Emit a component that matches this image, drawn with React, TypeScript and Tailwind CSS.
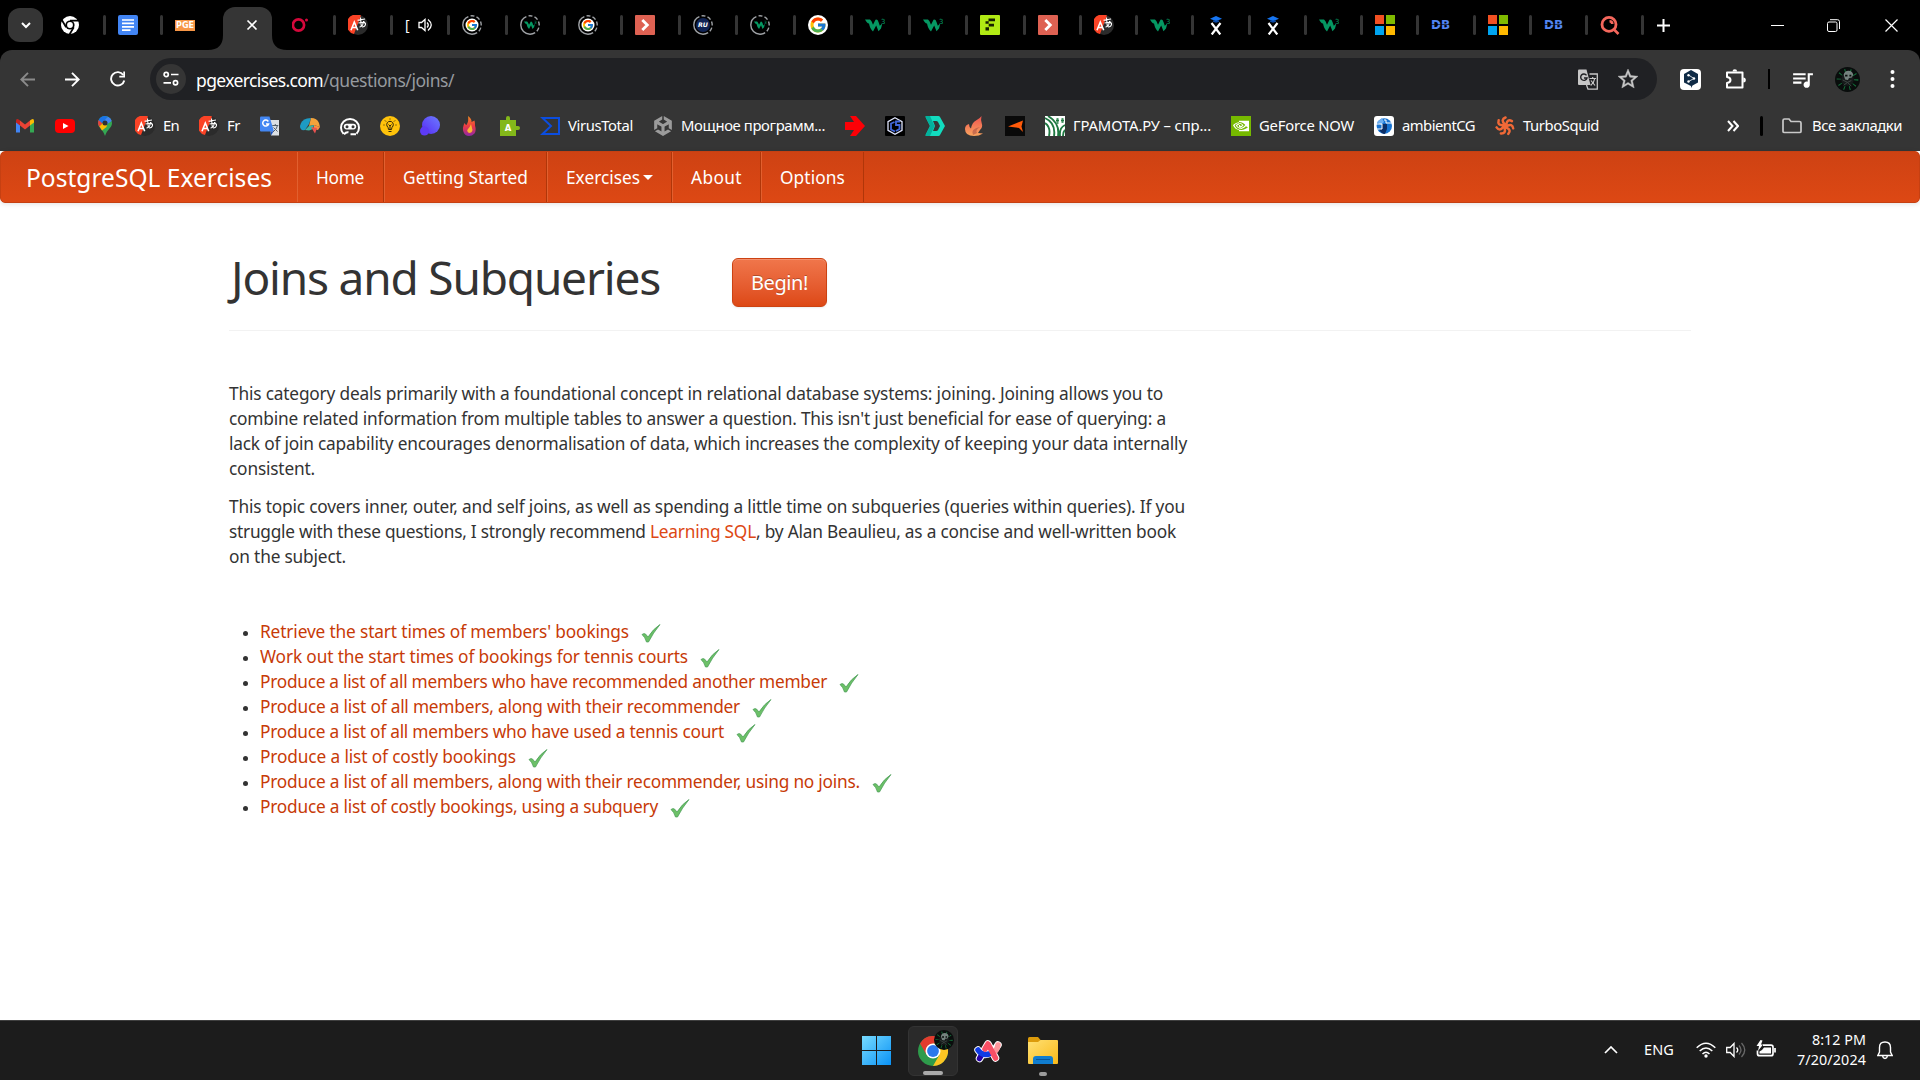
import React, { useLayoutEffect, useRef, useState } from "react";
import { FcGoogle } from "react-icons/fc";
import { MdStarOutline, MdQueueMusic } from "react-icons/md";
import { SiNvidia, SiUnity } from "react-icons/si";

/* Text run that spreads its letters evenly over a given width. */
function Fit({ w, children, className = "" }: { w: number; children: string; className?: string }) {
  const ref = useRef<HTMLSpanElement>(null);
  const [spacing, setSpacing] = useState(0);
  useLayoutEffect(() => {
    const el = ref.current;
    if (!el) return;
    el.style.letterSpacing = "0px";
    const natural = el.getBoundingClientRect().width;
    setSpacing((w - natural) / children.length);
    el.style.letterSpacing = `${(w - natural) / children.length}px`;
  }, [w, children]);
  return (
    <span className={`inline-block whitespace-pre ${className}`} style={{ width: w }}>
      <span ref={ref} style={{ letterSpacing: spacing }}>{children}</span>
    </span>
  );
}

type SvgProps = { children: React.ReactNode; box?: string; className?: string };
const Svg = ({ children, box = "0 0 20 20", className = "size-5" }: SvgProps) => (
  <svg viewBox={box} className={`${className} shrink-0`} fill="none">{children}</svg>
);

/* ---------- favicons ---------- */

const ChromeMono = () => (
  <Svg>
    <circle cx="10" cy="10" r="9" fill="#fff" />
    <circle cx="10" cy="10" r="4.6" fill="#000" />
    <circle cx="10" cy="10" r="2.9" fill="#fff" />
    <path d="M10 5.6h8.4M6.1 12.2 2 5.2M13.8 12.2 9.6 19.2" stroke="#000" strokeWidth="1.7" />
  </Svg>
);
const Docs = () => (
  <Svg>
    <rect width="20" height="20" rx="2" fill="#4285f4" />
    <path d="M4 5h12M4 8.4h12M4 11.8h12M4 15.2h8.5" stroke="#fff" strokeWidth="1.7" />
  </Svg>
);
const Pge = () => (
  <span className="mt-px flex h-[11px] w-5 items-center justify-center bg-[#f79646] font-['DejaVu_Sans'] text-[8px] leading-none font-bold text-white">
    <Fit w={18}>PGE</Fit>
  </span>
);
const RedO = () => (
  <Svg>
    <circle cx="6.5" cy="10" r="5.6" stroke="#d6083b" strokeWidth="2.7" />
    <circle cx="14.5" cy="5" r="1.5" fill="#d6083b" />
  </Svg>
);
const Translate = () => (
  <Svg>
    <circle cx="10" cy="10" r="10" fill="#2b2b2b" />
    <path d="M13 0.5A10 10 0 1 0 6 19.1Z" fill="#fb4326" />
    <path d="m3 15.200 3.300-8.200 3.400 8.200M4.200 12.500h4.400" stroke="#fff" strokeWidth="1.600" />
    <path d="M9.500 5.200 17 4M12.500 2.500l.8 8.500M10.500 8l6.500-1M15.500 6c0 3-1.500 6-4 6M14 8q4-1 3.500 1.500T14 12" stroke="#fff" strokeWidth="1.100" />
  </Svg>
);
const W3Shape = ({ small = false }: { small?: boolean }) => (
  <g transform={small ? "translate(4 3.700) scale(.63)" : undefined}>
    <path d="M0 4.500h5q1.500 1 3 5.200L10.500 4.700q2-.8 3 2.300l1.300 3.800L17.300 8.500 16 13.500 13.500 16.300 11.200 10.500 8 16.500Q5 14 4 8.500Q2.500 9 0 4.500Z" fill="#059862" />
    <text x="16" y="9" fontSize="7" fill="#059862" fontFamily="DejaVu Sans">3</text>
  </g>
);
const W3 = () => <Svg><W3Shape /></Svg>;
const Ring = ({ children }: { children: React.ReactNode }) => (
  <Svg>
    <circle cx="10" cy="10" r="9.200" stroke="#a0a3a7" strokeWidth="1.400" strokeDasharray="25 2.200 4 2.200 4 2.200 4 2.200 4 2.200 6 2.200" transform="rotate(90 10 10)" />
    {children}
  </Svg>
);
const RingG = () => (
  <Ring>
    <circle cx="10" cy="10" r="6.500" fill="#fff" />
    <g transform="translate(4 4)"><FcGoogle size={12} /></g>
  </Ring>
);
const RingW3 = () => <Ring><W3Shape small /></Ring>;
const RingRu = () => (
  <Ring>
    <circle cx="10" cy="10" r="7" fill="#102354" />
    <text x="5" y="12.300" fontSize="6.300" fontWeight="700" fontStyle="italic" fill="#fff" fontFamily="DejaVu Sans">RU</text>
  </Ring>
);
const RedAngle = () => (
  <Svg>
    <rect width="20" height="20" rx="1" fill="#de6152" />
    <path d="m7.300 5 5 5-5 5" stroke="#fff" strokeWidth="2.800" />
  </Svg>
);
const GoogleRound = () => (
  <span className="flex size-5 items-center justify-center rounded-full bg-white"><FcGoogle size={18} /></span>
);
const LimeF = () => (
  <Svg>
    <rect width="20" height="20" rx="1" fill="#b1ea14" />
    <path d="M8.500 3.500H15v2.800H8.500zM5.500 6.300h3.200v2.400H5.500zM8.700 8.700H14v2.800H8.700zM5.500 12.300h3.500v3.200H5.500z" fill="#172000" />
  </Svg>
);
const XHat = () => (
  <Svg>
    <path d="m10 1 6 2.700-6 2.600-6-2.600Z" fill="#1675f2" />
    <path d="m5.500 8 8.800 11.500M14.500 8 5.700 19.500" stroke="#fff" strokeWidth="2.200" />
    <path d="M7 5.500h6v1.200l-3 1-3-1Z" fill="#0c4aa5" />
  </Svg>
);
const Windows4 = () => (
  <span className="grid size-5 grid-cols-2 gap-0.5">
    <i className="bg-[#f25022]" /><i className="bg-[#7fba00]" /><i className="bg-[#00a4ef]" /><i className="bg-[#ffb900]" />
  </span>
);
const Db = () => (
  <span className="relative flex w-5 font-['DejaVu_Sans'] text-[12px] leading-5 font-bold text-[#5286f2]">
    <Fit w={19}>DB</Fit>
    <i className="absolute top-[9px] left-0 h-px w-full bg-black/60" />
  </span>
);
const RedSearch = () => (
  <Svg>
    <circle cx="9" cy="9.400" r="7" stroke="#f5675c" strokeWidth="2.800" />
    <path d="m13.500 14 5 5M9.500 6.200c1.700 0 2.800 1 2.800 2.800" stroke="#f5675c" strokeWidth="2.600" />
  </Svg>
);
const Playing = () => (
  <span className="flex w-7 items-center gap-[9px] text-[14px] leading-5 text-white">
    <span className="w-1">[</span>
    <Svg className="h-4 w-[15px]" box="0 0 15 16">
      <path d="M1 5.500h2.500L7 2.500v11L3.500 10.500H1Z" stroke="#fff" strokeWidth="1.300" />
      <path d="M9 5.500q2.500 2.500 0 5M10 2.500q6.500 5.500 0 11" stroke="#fff" strokeWidth="1.300" />
    </Svg>
  </span>
);

const tabs: { w: number; icon: React.ReactNode }[] = [
  { w: 57, icon: <Translate /> },
  { w: 57, icon: <Playing /> },
  { w: 58, icon: <RingG /> },
  { w: 58, icon: <RingW3 /> },
  { w: 57, icon: <RingG /> },
  { w: 58, icon: <RedAngle /> },
  { w: 57, icon: <RingRu /> },
  { w: 58, icon: <RingW3 /> },
  { w: 57, icon: <GoogleRound /> },
  { w: 58, icon: <W3 /> },
  { w: 57, icon: <W3 /> },
  { w: 58, icon: <LimeF /> },
  { w: 56, icon: <RedAngle /> },
  { w: 56, icon: <Translate /> },
  { w: 56, icon: <W3 /> },
  { w: 57, icon: <XHat /> },
  { w: 56, icon: <XHat /> },
  { w: 56, icon: <W3 /> },
  { w: 56, icon: <Windows4 /> },
  { w: 57, icon: <Db /> },
  { w: 56, icon: <Windows4 /> },
  { w: 56, icon: <Db /> },
  { w: 56, icon: <RedSearch /> },
];

function Tab({ w, icon, divider = true }: { w: number; icon: React.ReactNode; divider?: boolean }) {
  return (
    <div className="flex shrink-0 items-center justify-between pr-[12px]" style={{ width: w }}>
      {icon}
      {divider && <i className="h-5 w-[3px] rounded bg-[#353535]" />}
    </div>
  );
}

function TabStrip() {
  return (
    <div className="flex h-[50px] items-center bg-black pl-2">
      <button className="mr-[17px] flex h-[34px] w-[35px] items-center justify-center rounded-xl bg-[#353535]">
        <Svg className="size-3" box="0 0 12 12"><path d="m2 4 4 4 4-4" stroke="#fff" strokeWidth="2" /></Svg>
      </button>
      <Tab w={58} icon={<ChromeMono />} />
      <Tab w={57} icon={<Docs />} />
      <Tab w={33} icon={<Pge />} divider={false} />
      <div className="flex h-[50px] w-[79px] shrink-0 items-end">
        <Svg className="h-[15px] w-[15px]" box="0 0 15 15"><path d="M0 15Q15 15 15 0V15Z" fill="#353535" /></Svg>
        <div className="flex h-[43px] w-[49px] items-center justify-center rounded-t-xl bg-[#353535] pb-[7px] pl-[9px]">
          <Svg className="size-3" box="0 0 12 12"><path d="m1.500 1.500 9 9m0-9-9 9" stroke="#fff" strokeWidth="1.700" /></Svg>
        </div>
        <Svg className="h-[15px] w-[15px]" box="0 0 15 15"><path d="M0 0Q0 15 15 15H0Z" fill="#353535" /></Svg>
      </div>
      <div className="ml-[5px]"><Tab w={56} icon={<RedO />} /></div>
      {tabs.map((t, i) => <Tab key={i} {...t} />)}
      <div className="flex flex-1 items-center">
        <Svg className="ml-px size-[13px]" box="0 0 13 13"><path d="M6.500 0v13M0 6.500h13" stroke="#fff" strokeWidth="2" /></Svg>
        <i className="ml-[101px] h-px w-[13px] bg-white" />
        <Svg className="ml-[43px] size-[13px]" box="0 0 13 13">
          <rect x=".5" y="3" width="9.500" height="9.500" rx="1.500" stroke="#fff" />
          <path d="M3 .7h7.500a2 2 0 0 1 2 2V10" stroke="#fff" />
        </Svg>
        <Svg className="ml-[45px] size-[13px]" box="0 0 13 13"><path d="m.5.500 12 12m0-12-12 12" stroke="#fff" strokeWidth="1.200" /></Svg>
      </div>
    </div>
  );
}

/* Dark skull portrait on green rays. */
const Avatar = ({ className }: { className: string }) => (
  <Svg className={className} box="0 0 26 26">
    <circle cx="13" cy="13" r="13" fill="#090d0c" />
    <circle cx="13" cy="13" r="9" stroke="#14703a" strokeWidth="4.500" strokeDasharray="1 4.600" />
    <circle cx="13" cy="13" r="6.500" fill="#171b1b" />
    <path d="M9 8q1-4 5-4t5 4l-1.500 3-3 .5-1 2-3-.5Z" fill="#74827e" />
    <path d="M10.500 8h2.500v2h-2.500zM15 8h2v2h-2z" fill="#0a0e0c" />
    <path d="M8 13.500 13 16l4-2M9 19l4-3 4 4" stroke="#3d4844" />
  </Svg>
);

function Toolbar() {
  return (
    <div className="flex h-[58px] items-center pl-5 text-white">
      <Svg className="size-[15px]" box="0 0 15 15"><path d="M15 7.500H1.500M8 .8 1.300 7.500 8 14.200" stroke="#8b8b8b" strokeWidth="1.900" /></Svg>
      <Svg className="ml-[30px] size-[15px]" box="0 0 15 15"><path d="M0 7.500h13.500M7 .8l6.700 6.700L7 14.200" stroke="#fff" strokeWidth="1.900" /></Svg>
      <Svg className="ml-[30px] size-4" box="0 0 16 16">
        <path d="M13.300 4A6.700 6.700 0 1 0 14.300 9.500" stroke="#fff" strokeWidth="1.900" />
        <path d="M15 .5v6H9.300V4.800h4V.5Z" fill="#fff" />
      </Svg>
      <div className="ml-6 flex h-[42px] w-[1507px] items-center rounded-full bg-[#202124] pr-[19px] pl-1.5">
        <span className="flex size-[30px] items-center justify-center rounded-full bg-[#353535]">
          <Svg className="h-4 w-4" box="0 0 16 16">
            <circle cx="3.200" cy="3.500" r="2.100" stroke="#fff" strokeWidth="1.700" />
            <circle cx="12.500" cy="11.800" r="2.100" stroke="#fff" strokeWidth="1.700" />
            <path d="M8 3.500h7.500M.5 11.800H8" stroke="#fff" strokeWidth="1.700" />
          </Svg>
        </span>
        <span className="ml-2.5 flex pt-px font-['Noto_Sans'] text-[17.500px] leading-6">
          <Fit w={127}>pgexercises.com</Fit>
          <Fit w={131} className="text-[#969a9f]">/questions/joins/</Fit>
        </span>
        <Svg className="ml-auto size-[21px]" box="0 0 21 21">
          <path d="M11.500 5h7.800v15.200H10L8.500 16" stroke="#c7c7c7" strokeWidth="1.300" />
          <path d="M1 .5h7.500L12.500 16H1Q0 16 0 15V1.500Q0 .5 1 .5Z" fill="#c7c7c7" />
          <path d="M8.500 6.300A3.200 3.200 0 1 0 9 9H6" stroke="#202124" strokeWidth="1.400" />
          <path d="M11.500 9.500H18M14.700 8v1.500M12.700 16.500q3.500-3 4-7M13 11.500l4 5" stroke="#c7c7c7" strokeWidth="1.200" />
        </Svg>
        <MdStarOutline className="-mr-0.5 ml-[17px] size-[24px] text-[#c7c7c7]" stroke="#c7c7c7" strokeWidth=".4" />
      </div>
      <span className="ml-[23px] flex size-[21px] items-center justify-center rounded-sm bg-white">
        <Svg className="size-[18px]" box="0 0 18 18">
          <path d="m9 0 7 4v8.500L10.500 15.500 9 18V16L2 12.500V4Z" fill="#0f2b46" />
          <path d="M6.500 5 12 8.500 6.500 11.500" stroke="#fff" strokeWidth=".8" />
          <circle cx="6.500" cy="5.200" r="1.200" fill="#fff" /><circle cx="12" cy="8.500" r="1.200" fill="#fff" /><circle cx="6.500" cy="11.500" r="1.200" fill="#fff" />
        </Svg>
      </span>
      <Svg className="ml-6 size-[21px]" box="0 0 21 21">
        <path d="M2 3.500h15.500v15H2V14q3.500-.5 3.500-3T2 8Z" stroke="#fff" strokeWidth="2" strokeLinejoin="round" />
        <path d="M7.500 2.500a2.300 2.300 0 0 1 4.600 0ZM18.300 8.500a2.500 2.500 0 0 1 0 5Z" fill="#fff" />
      </Svg>
      <i className="ml-[22px] h-5 w-0.5 bg-black" />
      <MdQueueMusic className="ml-5 size-[25px]" />
      <Avatar className="ml-5 size-[25px]" />
      <Svg className="ml-[30px] h-5 w-[5px]" box="0 0 5 20">
        <g fill="#fff"><circle cx="2.500" cy="3" r="2" /><circle cx="2.500" cy="10" r="2" /><circle cx="2.500" cy="17" r="2" /></g>
      </Svg>
    </div>
  );
}

/* ---------- bookmark icons ---------- */

const Gmail = () => (
  <Svg>
    <path d="M1 5v11.500h4V9Z" fill="#4285f4" /><path d="M19 5v11.500h-4V9Z" fill="#34a853" />
    <path d="M5 4.500 10 8.500l5-4v5l-5 4-5-4Z" fill="#ea4335" />
    <path d="M1 5q0-3 3-1.300l1 .8v5L1 6.500Z" fill="#c5221f" /><path d="M19 5q0-3-3-1.300l-1 .8v5l4-3Z" fill="#fbbc04" />
  </Svg>
);
const Youtube = () => <Svg><rect y="3" width="20" height="14" rx="4" fill="#f00" /><path d="m8 7 5.500 3L8 13Z" fill="#fff" /></Svg>;
const Maps = () => (
  <Svg>
    <path d="M10 0a7 7 0 0 1 7 7c0 5-5 6-7 13C8 13 3 12 3 7a7 7 0 0 1 7-7Z" fill="#34a853" />
    <path d="M3 7a7 7 0 0 1 10-6.300L4.500 10.500Z" fill="#1a73e8" /><path d="m3.500 4 4 3.500L4.500 11Q3 9 3 7Z" fill="#ea4335" />
    <path d="m4.500 10.500 8-8.500-1 9L7 14.500Z" fill="#fbbc04" /><path d="M13 .7q3 1.300 3.700 4.300L11 9 8 6Z" fill="#4285f4" />
    <circle cx="10" cy="7" r="2.500" fill="#303030" />
  </Svg>
);
const GTranslate = () => (
  <Svg>
    <path d="M9 4h10v15.500h-8Z" fill="#dce0e4" />
    <path d="M1 .5h8.500L14 15.500H1Q0 15.500 0 14.500v-13Q0 .5 1 .5Z" fill="#4387f3" />
    <path d="M8.300 5.500A3 3 0 1 0 8.600 8H6" stroke="#fff" strokeWidth="1.500" />
    <path d="m10.500 15.500h3L11 19.500Z" fill="#1d52bd" />
    <path d="M12.300 9.500h6M15.300 8v1.500M13 16q4-3 4.500-6.500M13.500 11.500l4 4" stroke="#53606b" />
  </Svg>
);
const Brain = () => (
  <Svg>
    <path d="M0 10Q1 4 7 2.500L11 2 9 8 5 14Q0 15 0 10Z" fill="#1d9bc4" />
    <path d="M11 2q6 0 8 5l1 4-6-2-5 1Z" fill="#f3a33b" />
    <path d="m9 10 5-1-1 4-4 1.500-4-.5Z" fill="#3ab5a5" /><path d="m14 9 6 2-2 3-4-1Z" fill="#fa8f43" />
    <path d="m11 11 6 1-2 5.500Z" fill="#e95250" />
  </Svg>
);
const Robot = () => (
  <Svg>
    <path d="M3.500 17.800A9 8.700 0 1 1 16.500 17.800M4 18.300q2-2.500 4.500-2M16 18.300h-5.500" stroke="#fff" strokeWidth="2" />
    <rect x="3.800" y="7.800" width="12.400" height="5.600" rx="2.800" fill="#fff" />
    <circle cx="7" cy="10.700" r="1.500" fill="#353535" /><circle cx="13" cy="10.700" r="1.500" fill="#353535" />
  </Svg>
);
const Bulb = () => (
  <Svg>
    <circle cx="10" cy="10" r="10" fill="#ffc30b" />
    <path d="M8.500 13.500Q8.500 11.500 7 10a3.300 3.300 0 1 1 6 0q-1.500 1.500-1.500 3.500ZM8.500 15.500h3M10 9v4M8.500 8.500 10 10l1.500-1.500M10 2.500v1M3.500 9h1M15.500 9h1M5 4.500l1 1M15 4.500l-1 1" stroke="#30260a" strokeWidth="1" />
  </Svg>
);
const Purple = () => (
  <Svg>
    <defs><linearGradient id="violet" x1="1" y1="0" x2="0" y2="1"><stop stopColor="#6c7cff" /><stop offset="1" stopColor="#572bf3" /></linearGradient></defs>
    <circle cx="11" cy="9" r="9" fill="url(#violet)" /><circle cx="4.500" cy="15" r="4.500" fill="#5d3bf5" />
  </Svg>
);
const Fire = () => (
  <Svg>
    <defs><linearGradient id="fire" x1="0" y1="0" x2="0" y2="1"><stop stopColor="#f28a20" /><stop offset=".5" stopColor="#ed3b42" /><stop offset="1" stopColor="#8f27a9" /></linearGradient></defs>
    <path d="M8 0q4 3 3.500 6L14.500 4.500q.5 2 .5 5 1.500 5-.5 8Q12 20 9 20q-4 0-5.500-4Q2 12 4.500 7q1 2 2 2Q9 5 8 0Z" fill="url(#fire)" />
    <path d="M11 8q-1 3-3 5t1 4q3 0 3.500-3Z" fill="#fbb733" />
  </Svg>
);
const PuzzleA = () => (
  <Svg>
    <path d="M0 4h6V2q0-2 2-2t2 2v2h6v6h2q2 0 2 2t-2 2h-2v6H0Z" fill="#83b81a" />
    <text x="4.800" y="14.500" fontSize="8.500" fontWeight="700" fill="#fff" fontFamily="DejaVu Sans">A</text>
  </Svg>
);
const Virus = () => <Svg><path d="M2.500 2H19v16H2.500L11 10Z" stroke="#0b4de0" strokeWidth="2" /></Svg>;
const RedArrow = () => <Svg><path d="M0 6h9L5 0h6l9 10-9 10H5l4-6H0Z" fill="#fc0006" /></Svg>;
const Cs = () => (
  <Svg>
    <rect width="20" height="20" rx="1" fill="#000" />
    <path d="m10 1.700 7 4v8.600l-7 4-7-4V5.700Z" stroke="#dfe4fb" strokeWidth="1.300" />
    <path d="M9.500 6 6 7.500v6l4 2M15 5.500h-4V9h3.500v4L11 15" stroke="#4268dc" strokeWidth="1.800" />
  </Svg>
);
const Teal = () => (
  <Svg>
    <path d="M1 0h12.500q1 0 1.500 1l5 9-5 9q-.5 1-1.500 1H1q-1-.5 0-2l4-8-4-8Q0 .5 1 0Z" fill="#12dcbf" />
    <path d="M1 0h4l4.500 10L5 20H1q-1-.5 0-2l4-8-4-8Q0 .5 1 0Z" fill="#02b19c" />
    <path d="M8 5h3q1.500 0 2 1l2 4-2 4q-.5 1-2 1H8l2-5Z" fill="#353535" />
  </Svg>
);
const Flame = () => (
  <Svg>
    <defs><linearGradient id="flame" x1="0" y1="0" x2="0" y2="1"><stop stopColor="#ef5350" /><stop offset="1" stopColor="#f8a45e" /></linearGradient></defs>
    <path d="M16.500 0q-1 4 .3 7.500T15 14l-2 3 5 .5Q14 20 9 20 0 20 0 13q0-4 4-5 0 3 2 4.500 1-6 5-8T16.500 0Z" fill="url(#flame)" />
    <path d="M8 19Q5 13 15 11q-5 3-3 6Z" fill="#a34c44" opacity=".55" />
  </Svg>
);
const OrangeArrow = () => <Svg><rect width="20" height="20" fill="#090909" /><path d="m3 10.500 15-6-1.500 6L18 16l-4-4Z" fill="#ff5a0a" /></Svg>;
const Gramota = () => (
  <Svg>
    <rect width="20" height="20" fill="#fff" />
    <path d="M0 2q11 5 9 18M0 7q6 4 4 13M3 0q12 7 10 20M20 9q-6 3-5 11M20 14q-2 2-2 6" stroke="#1f7842" strokeWidth="1.900" />
    <path d="M12.500 2v6M17.500 2v5" stroke="#4e9a6a" strokeWidth="2" /><path d="M11 4.500h3M16 4.500h3" stroke="#1f7842" strokeWidth="1.500" />
  </Svg>
);
const Ambient = () => (
  <Svg>
    <rect width="20" height="20" rx="3" fill="#fff" />
    <circle cx="10.300" cy="10" r="7.700" fill="#1773d1" />
    <path d="M3 6 8 2l2 4-3 3Z" fill="#6caef0" /><path d="M8 8h5v5H8zM5 13l8 0-2 5q-4 0-6-5Z" fill="#0b2e67" />
    <path d="M2 8h6v5H2M10 4h2v3h6" stroke="#fff" />
  </Svg>
);
const Squid = () => (
  <Svg>
    <g stroke="#f06937" strokeWidth="2.500" strokeLinecap="round">
      {[0, 51.400, 102.900, 154.300, 205.700, 257.100, 308.600].map((a) => (
        <path key={a} d="M9.500 8Q5.500 3.500 10.500 1.500" transform={`rotate(${a} 10 10)`} />
      ))}
    </g>
    <circle cx="10" cy="10" r="3" fill="#f06937" />
  </Svg>
);

const bookmarks: { icon: React.ReactNode; label?: string; w?: number }[] = [
  { icon: <Gmail /> }, { icon: <Youtube /> }, { icon: <Maps /> },
  { icon: <Translate />, label: "En", w: 16 },
  { icon: <Translate />, label: "Fr", w: 13 },
  { icon: <GTranslate /> }, { icon: <Brain /> }, { icon: <Robot /> }, { icon: <Bulb /> }, { icon: <Purple /> }, { icon: <Fire /> }, { icon: <PuzzleA /> },
  { icon: <Virus />, label: "VirusTotal", w: 65 },
  { icon: <SiUnity className="size-5 text-[#9b9b9b]" />, label: "Мощное программ...", w: 144 },
  { icon: <RedArrow /> }, { icon: <Cs /> }, { icon: <Teal /> }, { icon: <Flame /> }, { icon: <OrangeArrow /> },
  { icon: <Gramota />, label: "ГРАМОТА.РУ – спр...", w: 138 },
  { icon: <span className="flex size-5 items-center justify-center bg-[#76b900]"><SiNvidia className="size-4 text-white" /></span>, label: "GeForce NOW", w: 95 },
  { icon: <Ambient />, label: "ambientCG", w: 73 },
  { icon: <Squid />, label: "TurboSquid", w: 76 },
];

function Bookmarks() {
  return (
    <div className="flex h-[43px] items-center gap-5 pl-[15px] font-['Noto_Sans'] text-[14.800px] leading-5 text-white">
      {bookmarks.map((b, i) => (
        <div key={i} className="flex shrink-0 items-center gap-2">
          {b.icon}
          {b.label && <Fit w={b.w ?? 0} className="pb-px">{b.label}</Fit>}
        </div>
      ))}
      <div className="ml-auto flex items-center pr-[18px]">
        <Svg className="h-3 w-3" box="0 0 12 12"><path d="m1 1 4.500 5L1 11M6.500 1 11 6l-4.500 5" stroke="#fff" strokeWidth="2" /></Svg>
        <i className="ml-[21px] h-5 w-[3px] rounded bg-black" />
        <Svg className="ml-[19px] h-4 w-5" box="0 0 20 16"><path d="M1 2.500Q1 1 2.500 1H7l2 2.500h8.500Q19 3.500 19 5v8.500q0 1-1.500 1h-15q-1.500 0-1.500-1Z" stroke="#c9c9c9" strokeWidth="1.700" /></Svg>
        <Fit w={90} className="ml-2.5 pb-px">Все закладки</Fit>
      </div>
    </div>
  );
}

/* ---------- page ---------- */

function NavItem({ label, w, box, caret = false }: { label: string; w: number; box: number; caret?: boolean }) {
  return (
    <a className="flex h-full items-center border-r border-l border-r-[#b03609] border-l-[#e2602f] pl-[18px]" style={{ width: box }}>
      <Fit w={w}>{label}</Fit>
      {caret && <i className="ml-[3px] border-x-5 border-t-5 border-x-transparent border-t-white" />}
    </a>
  );
}

const exercises: [string, number][] = [
  ["Retrieve the start times of members' bookings", 369],
  ["Work out the start times of bookings for tennis courts", 428],
  ["Produce a list of all members who have recommended another member", 567],
  ["Produce a list of all members, along with their recommender", 480],
  ["Produce a list of all members who have used a tennis court", 464],
  ["Produce a list of costly bookings", 256],
  ["Produce a list of all members, along with their recommender, using no joins.", 600],
  ["Produce a list of costly bookings, using a subquery", 398],
];

const Check = () => (
  <Svg className="mt-1 ml-3 h-[19px] w-5" box="0 0 20 19">
    <path d="M1 10.500q2-1.500 3.500-.5L7 13Q12 5 19 .5 12 9 7.500 18H5.500Q4 13 1 10.500Z" fill="#6cc067" stroke="#459a55" strokeWidth=".7" />
  </Svg>
);

function Page() {
  return (
    <main className="h-[869px] bg-white font-['Noto_Sans'] text-[17.300px] leading-[25px] text-[#333]">
      <nav className="flex h-[52px] items-center rounded-[5px] border border-[#c64012] bg-linear-to-b from-[#ce4213] to-[#dd4814] text-white shadow-[0_1px_5px_rgba(0,0,0,0.12)]">
        <span className="w-[296px] pl-[25px] text-[24.500px]"><Fit w={246}>PostgreSQL Exercises</Fit></span>
        <NavItem label="Home" w={48} box={87} />
        <NavItem label="Getting Started" w={125} box={163} />
        <NavItem label="Exercises" w={74} box={125} caret />
        <NavItem label="About" w={51} box={89} />
        <NavItem label="Options" w={65} box={103} />
      </nav>
      <div className="ml-[229px] w-[1462px]">
        <header className="flex h-[128px] items-start border-b border-[#f2f2f2] pt-[41px]">
          <h1 className="h-[66px] pl-0.5 text-[46px] leading-[66px]"><Fit w={429}>Joins and Subqueries</Fit></h1>
          <button className="mt-[14px] ml-[72px] flex h-[49px] w-[95px] items-center justify-center rounded-md border border-[#cc4212] bg-linear-to-b from-[#f0764b] to-[#dd4814] pb-px text-[20px] text-white shadow-[inset_0_1px_0_rgba(255,255,255,0.2),0_1px_2px_rgba(0,0,0,0.08)] [text-shadow:0_-1px_0_rgba(0,0,0,0.25)]">
            <Fit w={57}>Begin!</Fit>
          </button>
        </header>
        <p className="pt-[50px]">
          <Fit w={934}>This category deals primarily with a foundational concept in relational database systems: joining. Joining allows you to</Fit><br />
          <Fit w={937}>combine related information from multiple tables to answer a question. This isn't just beneficial for ease of querying: a</Fit><br />
          <Fit w={958}>lack of join capability encourages denormalisation of data, which increases the complexity of keeping your data internally</Fit><br />
          <Fit w={86}>consistent.</Fit>
        </p>
        <p className="pt-[13px]">
          <Fit w={956}>This topic covers inner, outer, and self joins, as well as spending a little time on subqueries (queries within queries). If you</Fit><br />
          <Fit w={421}>struggle with these questions, I strongly recommend </Fit>
          <Fit w={106} className="text-[#dd4814]">Learning SQL</Fit>
          <Fit w={420}>, by Alan Beaulieu, as a concise and well-written book</Fit><br />
          <Fit w={117}>on the subject.</Fit>
        </p>
        <ul className="mt-[50px] text-[#c73a07]">
          {exercises.map(([label, w]) => (
            <li key={label} className="flex h-[25px] items-center pl-[14px]">
              <i className="mt-[3px] mr-3 size-[5px] rounded-full bg-[#333]" />
              <Fit w={w}>{label}</Fit>
              <Check />
            </li>
          ))}
        </ul>
      </div>
    </main>
  );
}

/* ---------- taskbar ---------- */

function Taskbar() {
  return (
    <footer className="flex h-[60px] items-center border-t border-[#3f3f3f] bg-[#1c1c1c] pl-[862px] font-['Noto_Sans'] text-white">
      <Svg className="size-[29px]" box="0 0 29 29">
        <defs><linearGradient id="win" x1="0" y1="0" x2="29" y2="29" gradientUnits="userSpaceOnUse"><stop stopColor="#77dbff" /><stop offset="1" stopColor="#0a92f5" /></linearGradient></defs>
        <path d="M0 0h14v14H0zM15 0h14v14H15zM0 15h14v14H0zM15 15h14v14H15z" fill="url(#win)" />
      </Svg>
      <div className="relative ml-[17px] flex h-[50px] w-[50px] items-center justify-center rounded-md border border-[#333] bg-[#2a2a2a]">
        <Svg className="size-[30px]" box="0 0 30 30">
          <circle cx="15" cy="15" r="15" fill="#2e9b4b" />
          <path d="M2 7.500A15 15 0 0 1 28 7.500H15L8.500 18.700Z" fill="#e33b2e" />
          <path d="M28 7.500A15 15 0 0 1 15 30L21.500 18.700 15 7.500Z" fill="#fcc523" />
          <circle cx="15" cy="15" r="7.500" fill="#fff" /><circle cx="15" cy="15" r="5.900" fill="#2b78ec" />
        </Svg>
        <span className="absolute top-[3px] right-[3px] flex"><Avatar className="size-5" /></span>
        <i className="absolute bottom-0 h-1 w-5 rounded-full bg-[#aaa]" />
      </div>
      <Svg className="ml-4 h-6 w-7" box="0 0 28 24">
        <g strokeLinecap="round" strokeLinejoin="round">
          <path d="M4 11q4 6 10 4t10-9M5.500 19.500 14 5l7.500 14" stroke="#fff" strokeWidth="7.500" />
          <path d="M24 6q-1 6-6 8.500" stroke="#ff969b" strokeWidth="5.500" />
          <path d="M5.500 19.500 8 15" stroke="#2702a8" strokeWidth="5.500" />
          <path d="M4 11q4 6 11 4" stroke="#103be4" strokeWidth="5.500" />
          <path d="M11 10 14 5l7.500 14" stroke="#f84f65" strokeWidth="5.500" />
        </g>
      </Svg>
      <div className="relative ml-[26px] flex h-[50px] w-[30px] items-center justify-center">
        <Svg className="h-[27px] w-[30px]" box="0 0 30 27">
          <defs><linearGradient id="folder" x1="0" y1="0" x2="1" y2="1"><stop stopColor="#ffe174" /><stop offset="1" stopColor="#f9b919" /></linearGradient></defs>
          <path d="M0 1.500Q0 0 1.500 0H10l3 3.500V7H0Z" fill="#dc9b0b" />
          <path d="M0 5h10l2.500-2H29q1 0 1 1v22q0 1-1 1H1q-1 0-1-1Z" fill="url(#folder)" />
          <path d="M5 27v-5q0-3 3-3h14q3 0 3 3v5Z" fill="#107dcf" /><path d="M8 22.500h14" stroke="#07569c" />
        </Svg>
        <i className="absolute bottom-0 h-1 w-2 rounded-full bg-[#9b9b9b]" />
      </div>
      <div className="flex flex-1 items-center pb-px">
        <Svg className="ml-[546px] h-2 w-3.5" box="0 0 14 8"><path d="m1 7 6-6 6 6" stroke="#fff" strokeWidth="1.700" /></Svg>
        <Fit w={30} className="ml-[26px] text-[14.500px]">ENG</Fit>
        <Svg className="ml-[22px] h-4 w-5" box="0 0 20 16">
          <path d="M.7 5.700q9.300-9 18.600 0M3.700 9q6.300-6 12.600 0M6.500 12q3.500-3.500 7 0" stroke="#fff" strokeWidth="1.500" /><circle cx="10" cy="14" r="1.700" fill="#fff" />
        </Svg>
        <Svg className="ml-[10px] h-4 w-5" box="0 0 20 16">
          <path d="M.7 5.500h3.500L8 1.500v13l-3.800-4H.7Z" stroke="#fff" strokeWidth="1.300" />
          <path d="M10.500 5.500q2.500 2.500 0 5" stroke="#fff" strokeWidth="1.300" /><path d="M13 3.500q4 4.500 0 9M15.500 1q6.500 7 0 14" stroke="#686868" strokeWidth="1.300" />
        </Svg>
        <Svg className="mb-0.5 ml-[10px] h-[18px] w-5" box="0 0 20 18">
          <path d="M7 5.200h8q2 0 2 2v6.500q0 2-2 2H3.500q-2 0-2-2V10.500M19 8v4.500" stroke="#fff" strokeWidth="1.700" />
          <path d="M8 7.500h7v6H3.500V11.500L6 10Z" fill="#fff" /><path d="M4.500 0 .5 6h2.500l-1 5 5-6.500H5l1.500-4Z" fill="#fff" />
        </Svg>
        <div className="ml-5 flex w-[70px] flex-col items-end text-[14.300px] leading-5">
          <Fit w={54}>8:12 PM</Fit>
          <Fit w={69}>7/20/2024</Fit>
        </div>
        <Svg className="ml-[11px] h-[19px] w-4" box="0 0 16 19">
          <path d="M.8 14.500 2.500 11V6.500q0-5.500 5.500-5.500t5.500 5.500V11l1.700 3.500ZM5.500 14.500q.5 3 2.500 3t2.500-3" stroke="#fff" strokeWidth="1.400" />
        </Svg>
      </div>
    </footer>
  );
}

export default function App() {
  return (
    <div className="flex h-[1080px] w-[1920px] flex-col overflow-hidden bg-black font-['Noto_Sans','Open_Sans',sans-serif]">
      <TabStrip />
      <div className="h-[101px] shrink-0 rounded-t-xl bg-[#353535]">
        <Toolbar />
        <div className="-mt-[4px]"><Bookmarks /></div>
      </div>
      <Page />
      <Taskbar />
    </div>
  );
}
